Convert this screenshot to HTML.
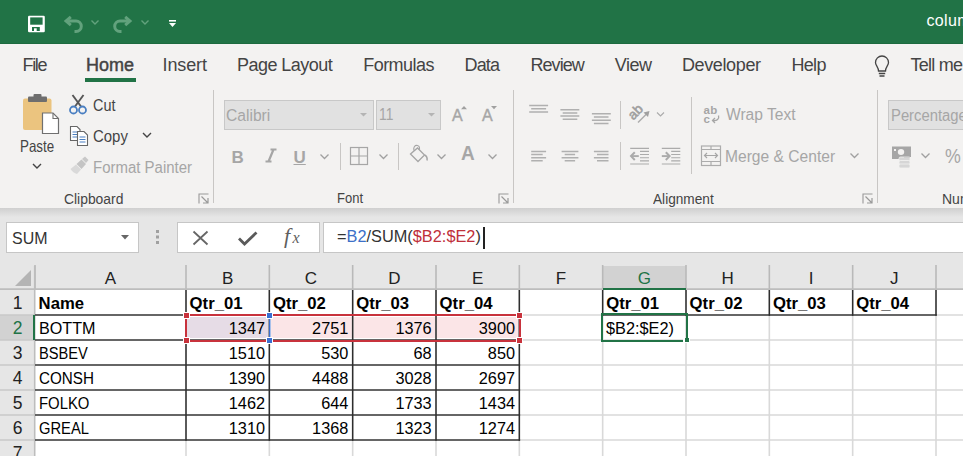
<!DOCTYPE html>
<html><head><meta charset="utf-8">
<style>
*{margin:0;padding:0;box-sizing:border-box}
html,body{width:963px;height:456px;overflow:hidden;background:#fff;font-family:"Liberation Sans",sans-serif;position:relative}
.a{position:absolute}
#title{left:0;top:0;width:963px;height:44px;background:#217346;border-bottom:1px solid #1d6a3f}
#tabs{left:0;top:44px;width:963px;height:165px;background:#f3f2f1}
.tab{position:absolute;top:55px;font-size:18px;color:#444;white-space:nowrap}
#fbar{left:0;top:209px;width:963px;height:57px;background:#e6e6e6}
.rl{position:absolute;font-size:15px;color:#444;white-space:nowrap}
.dis{color:#a6a6a6}
.grp{position:absolute;top:189px;font-size:14px;color:#444}
.vsep{position:absolute;width:1px;background:#c8c6c4}
.hd{position:absolute;height:24px;line-height:26px;text-align:center;font-size:17px}
.rn{position:absolute;left:0;width:35px;height:25px;line-height:27px;text-align:center;font-size:17.5px}
.c{position:absolute;height:25px;line-height:27px;font-size:16.3px;color:#000;white-space:nowrap}
.b{font-weight:bold;font-size:16.7px}
.r{text-align:right}
</style></head><body>
<div id="title" class="a"></div>
<!-- QAT -->
<svg class="a" style="left:0;top:0" width="200" height="45">
  <rect x="28" y="15.8" width="16.8" height="16.4" rx="1.2" fill="#fff"/>
  <rect x="30.2" y="17.4" width="12.4" height="7.3" fill="#217346"/>
  <rect x="32" y="27" width="7.8" height="4" fill="#217346"/>
  <rect x="34" y="28.3" width="2.7" height="3" fill="#fff"/>
  <g fill="none" stroke="#62a27d" stroke-width="3" stroke-linecap="butt">
    <path d="M66 21 H76 A5.3 5.3 0 0 1 76 31.6 H74.5"/>
    <path d="M70.8 16.8 L66 21 L70.8 25.2"/>
    <path d="M130 21 H120 A5.3 5.3 0 0 0 120 31.6 H121.5"/>
    <path d="M125.2 16.8 L130 21 L125.2 25.2"/>
  </g>
  <g fill="none" stroke="#62a27d" stroke-width="1.4">
    <path d="M91.5 20.5 L95 24 L98.5 20.5"/>
    <path d="M141.5 20.5 L145 24 L148.5 20.5"/>
  </g>
  <rect x="169" y="20" width="7" height="1.6" fill="#fff"/>
  <path d="M169 23 H176 L172.5 27 Z" fill="#fff"/>
</svg>
<div class="a" style="left:926.5px;top:12.3px;font-size:16px;letter-spacing:0.35px;color:#fff;white-space:nowrap">columns</div>

<div id="tabs" class="a"></div>
<div class="tab" style="left:22.5px;letter-spacing:-1.37px">File</div>
<div class="tab" style="left:86px;letter-spacing:-0.03px;-webkit-text-stroke:0.45px #444">Home</div>
<div class="a" style="left:85px;top:78px;width:51px;height:4px;background:#217346"></div>
<div class="tab" style="left:162.5px;letter-spacing:-0.12px">Insert</div>
<div class="tab" style="left:237px;letter-spacing:-0.54px">Page Layout</div>
<div class="tab" style="left:363.3px;letter-spacing:-0.56px">Formulas</div>
<div class="tab" style="left:464.5px;letter-spacing:-0.83px">Data</div>
<div class="tab" style="left:530.5px;letter-spacing:-0.96px">Review</div>
<div class="tab" style="left:614.7px;letter-spacing:-0.47px">View</div>
<div class="tab" style="left:682px;letter-spacing:-0.38px">Developer</div>
<div class="tab" style="left:791.5px;letter-spacing:-0.70px">Help</div>
<svg class="a" style="left:872px;top:55px" width="24" height="26">
  <path d="M6.5 16 C6.5 12 3.5 10.5 3.5 7.5 A6.5 6.5 0 0 1 16.5 7.5 C16.5 10.5 13.5 12 13.5 16 Z" fill="none" stroke="#444" stroke-width="1.3"/>
  <path d="M6.8 18.5 H13.2 M7.5 21 H12.5" stroke="#444" stroke-width="1.3"/>
</svg>
<div class="tab" style="left:910.4px;letter-spacing:-0.73px">Tell me</div>

<!-- separators -->
<div class="vsep" style="left:213px;top:90px;height:113px"></div>
<div class="vsep" style="left:513px;top:90px;height:113px"></div>
<div class="vsep" style="left:877px;top:90px;height:113px"></div>

<!-- Clipboard group -->
<svg class="a" style="left:18px;top:90px" width="46" height="48">
  <rect x="5" y="8.5" width="28.5" height="31.5" rx="2" fill="#ebc47f"/>
  <rect x="10" y="6.5" width="19" height="5.5" rx="1" fill="#6e6e6e"/>
  <rect x="15.5" y="4" width="8" height="4" rx="1" fill="#6e6e6e"/>
  <path d="M24.5 23 H35 L40.5 28.5 V43.5 H24.5 Z" fill="#fff" stroke="#707070" stroke-width="1.2"/>
  <path d="M35 23 V28.5 H40.5" fill="none" stroke="#707070" stroke-width="1.1"/>
</svg>
<div id="t_paste" class="rl" style="left:19.70px;top:136.77px;font-size:16.50px;transform:scaleX(0.811);transform-origin:0 0;color:#444">Paste</div>
<svg class="a" style="left:30px;top:160px" width="14" height="12"><path d="M3 4 L7 8 L11 4" fill="none" stroke="#444" stroke-width="1.4"/></svg>

<svg class="a" style="left:66px;top:92px" width="26" height="24">
  <g fill="none" stroke="#555" stroke-width="1.9">
    <path d="M6.5 3 L15 14.5"/><path d="M17.5 3 L9 14.5"/>
  </g>
  <g fill="none" stroke="#4a7fc1" stroke-width="1.8">
    <circle cx="7.5" cy="18" r="3.5"/><circle cx="16.5" cy="18" r="3.5"/>
  </g>
</svg>
<div id="t_cut" class="rl" style="left:93.37px;top:96.81px;font-size:16.00px;transform:scaleX(0.900);transform-origin:0 0;">Cut</div>

<svg class="a" style="left:68px;top:124px" width="24" height="24">
  <path d="M2.5 2.5 H9 L12 5.5 V16.5 H2.5 Z" fill="#fff" stroke="#666" stroke-width="1.1"/>
  <path d="M4.5 8 H10 M4.5 10.5 H10 M4.5 13 H10" stroke="#4a7fc1" stroke-width="1.2"/>
  <path d="M9.5 7.5 H16 L19.5 11 V21.5 H9.5 Z" fill="#fff" stroke="#666" stroke-width="1.1"/>
  <path d="M11.5 13 H17.5 M11.5 15.5 H17.5 M11.5 18 H17.5" stroke="#4a7fc1" stroke-width="1.2"/>
</svg>
<div id="t_copy" class="rl" style="left:93.31px;top:127.58px;font-size:16.00px;transform:scaleX(0.934);transform-origin:0 0;">Copy</div>
<svg class="a" style="left:140px;top:130px" width="14" height="10"><path d="M3 3 L7 7 L11 3" fill="none" stroke="#444" stroke-width="1.4"/></svg>

<svg class="a" style="left:68px;top:156px" width="24" height="20">
  <path d="M2.5 13 L8 8.5 L13 13.5 L9 18 Q5 17 2.5 13 Z" fill="#d9d9d9"/>
  <path d="M8.5 8 L13.5 3.5 L18 8 L13.5 13 Z" fill="#c4c4c4"/>
  <path d="M14 3 L17 0.5 L20.5 4 L18 7 Z" fill="#c8c8c8"/>
</svg>
<div id="t_fp" class="rl dis" style="left:92.76px;top:158.84px;font-size:16.00px;transform:scaleX(0.936);transform-origin:0 0;">Format Painter</div>
<div id="t_clip" class="grp" style="left:64.07px;top:191.09px;font-size:14.00px;transform:scaleX(0.991);transform-origin:0 0;">Clipboard</div>
<svg class="a" style="left:197.5px;top:192.5px" width="14" height="14"><path d="M1 10.5 V1 H10.5" fill="none" stroke="#999" stroke-width="1.1"/><path d="M3.5 3.5 L9.5 9.5 M5 10 H10 V5" fill="none" stroke="#999" stroke-width="1.2"/></svg>

<!-- Font group -->
<div class="a" style="left:224px;top:100px;width:150px;height:30px;background:#e1e1e1;border:1px solid #c8c8c8"></div>
<div id="t_calibri" class="rl dis" style="left:226.32px;top:106.13px;font-size:16.30px;transform:scaleX(0.959);transform-origin:0 0;">Calibri</div>
<svg class="a" style="left:358px;top:110px" width="12" height="10"><path d="M2 3 H9 L5.5 6.5 Z" fill="#b4b4b4"/></svg>
<div class="a" style="left:376px;top:100px;width:65px;height:30px;background:#e1e1e1;border:1px solid #c8c8c8"></div>
<div id="t_11" class="rl dis" style="left:379.24px;top:105.42px;font-size:16.30px;transform:scaleX(0.849);transform-origin:0 0;">11</div>
<svg class="a" style="left:426px;top:110px" width="12" height="10"><path d="M2 3 H9 L5.5 6.5 Z" fill="#b4b4b4"/></svg>
<div class="rl dis" style="left:452px;top:106.5px;font-size:16px;-webkit-text-stroke:0.4px #a6a6a6">A</div>
<svg class="a" style="left:458.5px;top:103.5px" width="10" height="8"><path d="M2 5.2 L5 2 L8 5.2 Z" fill="#a0a0a0"/></svg>
<div class="rl dis" style="left:482px;top:106.5px;font-size:16px;-webkit-text-stroke:0.4px #a6a6a6">A</div>
<svg class="a" style="left:489px;top:103.5px" width="10" height="8"><path d="M2 2 H8 L5 5.2 Z" fill="#a0a0a0"/></svg>

<div class="rl dis" style="left:231.5px;top:147.5px;font-size:17px;font-weight:bold">B</div>
<svg class="a" style="left:264px;top:148px" width="14" height="16"><path d="M6.5 1.5 H12.5 M1.5 13.5 H7.5 M9.5 1.5 L4.5 13.5" fill="none" stroke="#a6a6a6" stroke-width="2.2"/></svg>
<div class="rl dis" style="left:293.5px;top:147.5px;font-size:17px;text-decoration:underline;font-weight:bold">U</div>
<svg class="a" style="left:318px;top:152px" width="14" height="10"><path d="M2.5 2.5 L6.5 6.5 L10.5 2.5" fill="none" stroke="#a0a0a0" stroke-width="1.3"/></svg>
<div class="vsep" style="left:340px;top:143px;height:27px"></div>
<svg class="a" style="left:349px;top:146px" width="20" height="20"><rect x="1.5" y="1.5" width="17" height="17" fill="none" stroke="#a6a6a6" stroke-width="1.2"/><path d="M10 1.5 V18.5 M1.5 10 H18.5" stroke="#a6a6a6" stroke-width="1.2"/></svg>
<svg class="a" style="left:377px;top:152px" width="14" height="10"><path d="M2.5 2.5 L6.5 6.5 L10.5 2.5" fill="none" stroke="#a0a0a0" stroke-width="1.3"/></svg>
<div class="vsep" style="left:398px;top:143px;height:27px"></div>
<svg class="a" style="left:408px;top:144px" width="24" height="22">
  <path d="M2.5 10 L9.5 4 L16.5 11 L10 17.5 Z" fill="none" stroke="#a6a6a6" stroke-width="1.3"/>
  <path d="M6 6.5 C5 3 7 1 9.5 1.5 C11.5 2 12 4 11 6" fill="none" stroke="#a6a6a6" stroke-width="1.2"/>
  <path d="M16.5 11 C18.5 12 19.5 14 19 16.5" fill="none" stroke="#a6a6a6" stroke-width="1.5"/>
</svg>
<svg class="a" style="left:435px;top:152px" width="14" height="10"><path d="M2.5 2.5 L6.5 6.5 L10.5 2.5" fill="none" stroke="#a0a0a0" stroke-width="1.3"/></svg>
<div class="rl dis" style="left:461px;top:142px;font-size:20px;font-weight:bold;transform:scaleX(0.95);transform-origin:0 0">A</div>
<svg class="a" style="left:486px;top:152px" width="14" height="10"><path d="M2.5 2.5 L6.5 6.5 L10.5 2.5" fill="none" stroke="#a0a0a0" stroke-width="1.3"/></svg>
<div id="t_font" class="grp" style="left:337.37px;top:190.12px;font-size:14.00px;transform:scaleX(0.929);transform-origin:0 0;">Font</div>
<svg class="a" style="left:497.8px;top:192.5px" width="14" height="14"><path d="M1 10.5 V1 H10.5" fill="none" stroke="#999" stroke-width="1.1"/><path d="M3.5 3.5 L9.5 9.5 M5 10 H10 V5" fill="none" stroke="#999" stroke-width="1.2"/></svg>

<!-- Alignment group -->
<svg class="a" style="left:520px;top:96px" width="360" height="80">
  <g stroke="#ababab" stroke-width="1.15" fill="none">
    <!-- top align -->
    <path stroke="#b0b0b0" stroke-width="1.5" d="M9.2 9.4 H28.1 M11.2 12.7 H26.1 M9.2 15.9 H28.1 M40.4 13.7 H59.3 M42.7 16.9 H57.3 M40.4 20.1 H59.3 M42.7 23.3 H57.3 M71.9 17.8 H90.8 M73.9 21.0 H88.5 M71.9 24.2 H90.8 M73.9 27.4 H88.5 M11.2 55.5 H26.1 M11.2 58.6 H22.7 M11.2 61.7 H26.1 M11.2 64.8 H22.7 M41.6 55.5 H58.4 M44.7 58.6 H55.1 M41.6 61.7 H58.4 M44.7 64.8 H55.1 M73.9 55.5 H88.5 M77.0 58.6 H88.5 M73.9 61.7 H88.5 M77.0 64.8 H88.5"/>
    <!-- orientation -->
    <path d="M118 26.5 L127 17.5" stroke-width="1.5"/>
    <path d="M137 16.5 L140.5 20 L144 16.5"/>
    <!-- decrease indent -->
    <path d="M110.2 52.4 H129 M120 55.4 H129 M120 58.5 H129 M120 61.7 H129 M120 64.9 H129 M110.2 68 H129"/>
    <path d="M114.8 56.2 L111 60.1 L114.8 64" stroke-width="2"/>
    <path d="M111 60.1 H118.8" stroke-width="1.9"/>
    <!-- increase indent -->
    <path d="M141.8 52.4 H160.3 M151.2 55.4 H160.3 M151.2 58.5 H160.3 M151.2 61.7 H160.3 M151.2 64.9 H160.3 M141.8 68 H160.3"/>
    <path d="M145.8 56.2 L149.6 60.1 L145.8 64" stroke-width="2"/>
    <path d="M141.8 60.1 H149.6" stroke-width="1.9"/>
  </g>
  <text x="107" y="19.5" transform="rotate(-45 116 14.5)" font-family="Liberation Sans" font-size="13.5" fill="#a0a0a0" stroke="#a0a0a0" stroke-width="0.6">ab</text>
  <path d="M129.5 15 L123.5 16.5 L128 21 Z" fill="#a0a0a0"/>
</svg>
<div class="vsep" style="left:620px;top:101px;height:28px"></div>
<div class="vsep" style="left:620px;top:142px;height:28px"></div>
<div class="vsep" style="left:691px;top:97px;height:77px"></div>
<svg class="a" style="left:700px;top:103px" width="24" height="22">
  <text x="3.5" y="11" font-family="Liberation Sans" font-size="11.5" fill="#a6a6a6" font-weight="bold" letter-spacing="0.3">ab</text>
  <text x="3.5" y="20" font-family="Liberation Sans" font-size="11.5" fill="#a6a6a6" font-weight="bold">c</text>
  <path d="M18.5 12.5 C19.5 16 17 18 13 17.5 M15 15 L12.5 17.5 L15 20" fill="none" stroke="#a6a6a6" stroke-width="1.3"/>
</svg>
<div id="t_wrap" class="rl dis" style="left:725.94px;top:106.08px;font-size:16.00px;transform:scaleX(0.974);transform-origin:0 0;">Wrap Text</div>
<svg class="a" style="left:699px;top:144px" width="24" height="24">
  <rect x="2.5" y="2" width="19" height="19.5" fill="none" stroke="#acacac" stroke-width="1.2"/>
  <path d="M2.5 5.5 H21.5 M2.5 17.5 H21.5 M12 2 V5.5 M12 17.5 V21.5" stroke="#acacac" stroke-width="1.2"/>
  <path d="M5.5 11.5 H18.5 M8 9 L5.5 11.5 L8 14 M16 9 L18.5 11.5 L16 14" fill="none" stroke="#a6a6a6" stroke-width="1.2"/>
</svg>
<div id="t_merge" class="rl dis" style="left:724.80px;top:147.64px;font-size:16.00px;transform:scaleX(0.975);transform-origin:0 0;">Merge &amp; Center</div>
<svg class="a" style="left:848px;top:151px" width="14" height="10"><path d="M2.5 2.5 L6.5 6.5 L10.5 2.5" fill="none" stroke="#a0a0a0" stroke-width="1.3"/></svg>
<div id="t_align" class="grp" style="left:652.60px;top:190.52px;font-size:14.00px;transform:scaleX(0.975);transform-origin:0 0;">Alignment</div>
<svg class="a" style="left:861.5px;top:192.5px" width="14" height="14"><path d="M1 10.5 V1 H10.5" fill="none" stroke="#999" stroke-width="1.1"/><path d="M3.5 3.5 L9.5 9.5 M5 10 H10 V5" fill="none" stroke="#999" stroke-width="1.2"/></svg>

<!-- Number group -->
<div class="a" style="left:888px;top:100px;width:80px;height:30px;background:#e1e1e1;border:1px solid #c8c8c8"></div>
<div class="rl dis" style="left:891px;top:106.5px;font-size:15.6px;transform:scaleX(0.95);transform-origin:0 0">Percentage</div>
<svg class="a" style="left:889px;top:144px" width="28" height="26">
  <path d="M3 2.5 H22 V13 H14 V15 H3 Z" fill="#a6a6a6"/>
  <ellipse cx="12" cy="8" rx="3.2" ry="3" fill="#f3f2f1"/>
  <rect x="5" y="5" width="2" height="2" fill="#f3f2f1"/>
  <g fill="#d6d6d6" stroke="#f3f2f1" stroke-width="0.8">
    <rect x="10" y="13" width="11" height="4" rx="1.5"/>
    <rect x="10" y="16.5" width="11" height="4" rx="1.5"/>
    <rect x="10" y="20" width="11" height="4" rx="1.5"/>
  </g>
  <path d="M15 13 H21" stroke="#c0c0c0" stroke-width="1"/>
</svg>
<svg class="a" style="left:919px;top:151px" width="14" height="10"><path d="M2.5 2.5 L6.5 6.5 L10.5 2.5" fill="none" stroke="#a0a0a0" stroke-width="1.3"/></svg>
<div id="t_pcts" class="rl dis" style="left:945.04px;top:144.68px;font-size:20.00px;transform:scaleX(0.888);transform-origin:0 0;">%</div>
<div class="grp" style="left:942px;top:190.5px;font-size:14px">Number</div>

<!-- ribbon bottom shadow -->
<div class="a" style="left:0;top:209px;width:963px;height:5px;background:linear-gradient(#cfcfcf,#e6e6e6)"></div>

<!-- Formula bar -->
<div id="fbar" class="a"></div>
<div class="a" style="left:0;top:208px;width:963px;height:9px;background:linear-gradient(#cfcfcf,#e6e6e6)"></div>
<div class="a" style="left:6px;top:222px;width:133px;height:31px;background:#fff;border:1px solid #c6c6c6"></div>
<div id="t_sum" class="rl" style="left:12.46px;top:229.18px;font-size:16.30px;transform:scaleX(0.981);transform-origin:0 0;color:#333">SUM</div>
<svg class="a" style="left:119px;top:233px" width="12" height="8"><path d="M2 2 H10 L6 6.5 Z" fill="#666"/></svg>
<svg class="a" style="left:154px;top:228px" width="8" height="18"><rect x="2" y="2" width="3" height="3" fill="#a0a0a0"/><rect x="2" y="7.5" width="3" height="3" fill="#a0a0a0"/><rect x="2" y="13" width="3" height="3" fill="#a0a0a0"/></svg>
<div class="a" style="left:177px;top:222px;width:143px;height:31px;background:#fff;border:1px solid #c6c6c6"></div>
<svg class="a" style="left:190px;top:228px" width="120" height="22">
  <path d="M3.5 3.5 L17.5 16.5 M17.5 3.5 L3.5 16.5" stroke="#666" stroke-width="1.8"/>
  <path d="M49 10.5 L54.5 16 L66.5 4.5" fill="none" stroke="#5a5a5a" stroke-width="2.8"/>
  <text x="94" y="15" font-family="Liberation Serif" font-style="italic" font-size="22" fill="#5f5f5f">f</text>
  <text x="102.5" y="15" font-family="Liberation Serif" font-style="italic" font-size="16" fill="#5f5f5f">x</text>
</svg>
<div class="a" style="left:323px;top:222px;width:645px;height:31px;background:#fff;border:1px solid #c6c6c6"></div>
<div id="t_formula" class="rl" style="left:336.91px;top:227.34px;font-size:16.80px;transform:scaleX(0.973);transform-origin:0 0;color:#333">=<span style="color:#3c70c8">B2</span>/SUM(<span style="color:#c0303a">$B2:$E2</span>)</div>
<div class="a" style="left:483px;top:227px;width:1.5px;height:22px;background:#222"></div>
<div class="a" style="left:0px;top:266px;width:963px;height:24px;background:#e6e6e6;"></div>
<div class="a" style="left:0px;top:290px;width:35px;height:166px;background:#e6e6e6;"></div>
<div class="a" style="left:603px;top:266px;width:83px;height:23px;background:#d2d2d2;"></div>
<div class="a" style="left:0px;top:315px;width:34px;height:25px;background:#d2d2d2;"></div>
<svg class="a" style="left:0;top:266px" width="35" height="24"><polygon points="31,4 31,20 15,20" fill="#b4b4b4"/></svg>
<div class="a" style="left:187px;top:317px;width:81px;height:21px;background:#e6dce6;"></div>
<div class="a" style="left:270px;top:317px;width:249px;height:21px;background:#fbe5e7;"></div>
<svg class="a" style="left:0;top:0" width="963" height="456"><line x1="35.00" y1="315.00" x2="963.00" y2="315.00" stroke="#d9d9d9" stroke-width="1.6"/><line x1="35.00" y1="340.00" x2="963.00" y2="340.00" stroke="#d9d9d9" stroke-width="1.6"/><line x1="35.00" y1="365.00" x2="963.00" y2="365.00" stroke="#d9d9d9" stroke-width="1.6"/><line x1="35.00" y1="390.00" x2="963.00" y2="390.00" stroke="#d9d9d9" stroke-width="1.6"/><line x1="35.00" y1="415.00" x2="963.00" y2="415.00" stroke="#d9d9d9" stroke-width="1.6"/><line x1="35.00" y1="440.00" x2="963.00" y2="440.00" stroke="#d9d9d9" stroke-width="1.6"/><line x1="186.00" y1="290.00" x2="186.00" y2="456.00" stroke="#d9d9d9" stroke-width="1.6"/><line x1="269.33" y1="290.00" x2="269.33" y2="456.00" stroke="#d9d9d9" stroke-width="1.6"/><line x1="352.67" y1="290.00" x2="352.67" y2="456.00" stroke="#d9d9d9" stroke-width="1.6"/><line x1="436.00" y1="290.00" x2="436.00" y2="456.00" stroke="#d9d9d9" stroke-width="1.6"/><line x1="519.33" y1="290.00" x2="519.33" y2="456.00" stroke="#d9d9d9" stroke-width="1.6"/><line x1="602.67" y1="290.00" x2="602.67" y2="456.00" stroke="#d9d9d9" stroke-width="1.6"/><line x1="686.00" y1="290.00" x2="686.00" y2="456.00" stroke="#d9d9d9" stroke-width="1.6"/><line x1="769.33" y1="290.00" x2="769.33" y2="456.00" stroke="#d9d9d9" stroke-width="1.6"/><line x1="852.67" y1="290.00" x2="852.67" y2="456.00" stroke="#d9d9d9" stroke-width="1.6"/><line x1="936.00" y1="290.00" x2="936.00" y2="456.00" stroke="#d9d9d9" stroke-width="1.6"/><line x1="35.00" y1="265.00" x2="35.00" y2="290.00" stroke="#b9b9b9" stroke-width="1.6"/><line x1="186.00" y1="265.00" x2="186.00" y2="290.00" stroke="#b9b9b9" stroke-width="1.6"/><line x1="269.33" y1="265.00" x2="269.33" y2="290.00" stroke="#b9b9b9" stroke-width="1.6"/><line x1="352.67" y1="265.00" x2="352.67" y2="290.00" stroke="#b9b9b9" stroke-width="1.6"/><line x1="436.00" y1="265.00" x2="436.00" y2="290.00" stroke="#b9b9b9" stroke-width="1.6"/><line x1="519.33" y1="265.00" x2="519.33" y2="290.00" stroke="#b9b9b9" stroke-width="1.6"/><line x1="602.67" y1="265.00" x2="602.67" y2="290.00" stroke="#b9b9b9" stroke-width="1.6"/><line x1="686.00" y1="265.00" x2="686.00" y2="290.00" stroke="#b9b9b9" stroke-width="1.6"/><line x1="769.33" y1="265.00" x2="769.33" y2="290.00" stroke="#b9b9b9" stroke-width="1.6"/><line x1="852.67" y1="265.00" x2="852.67" y2="290.00" stroke="#b9b9b9" stroke-width="1.6"/><line x1="936.00" y1="265.00" x2="936.00" y2="290.00" stroke="#b9b9b9" stroke-width="1.6"/><line x1="0.00" y1="315.00" x2="35.00" y2="315.00" stroke="#c8c8c8" stroke-width="1.6"/><line x1="0.00" y1="340.00" x2="35.00" y2="340.00" stroke="#c8c8c8" stroke-width="1.6"/><line x1="0.00" y1="365.00" x2="35.00" y2="365.00" stroke="#c8c8c8" stroke-width="1.6"/><line x1="0.00" y1="390.00" x2="35.00" y2="390.00" stroke="#c8c8c8" stroke-width="1.6"/><line x1="0.00" y1="415.00" x2="35.00" y2="415.00" stroke="#c8c8c8" stroke-width="1.6"/><line x1="0.00" y1="440.00" x2="35.00" y2="440.00" stroke="#c8c8c8" stroke-width="1.6"/><line x1="0.00" y1="289.10" x2="963.00" y2="289.10" stroke="#bdbdbd" stroke-width="1.8"/><line x1="34.70" y1="266.00" x2="34.70" y2="456.00" stroke="#bdbdbd" stroke-width="1.6"/><line x1="35.00" y1="315.00" x2="520.13" y2="315.00" stroke="#3c3c3c" stroke-width="1.6"/><line x1="35.00" y1="340.00" x2="520.13" y2="340.00" stroke="#3c3c3c" stroke-width="1.6"/><line x1="35.00" y1="365.00" x2="520.13" y2="365.00" stroke="#3c3c3c" stroke-width="1.6"/><line x1="35.00" y1="390.00" x2="520.13" y2="390.00" stroke="#3c3c3c" stroke-width="1.6"/><line x1="35.00" y1="415.00" x2="520.13" y2="415.00" stroke="#3c3c3c" stroke-width="1.6"/><line x1="35.00" y1="440.00" x2="520.13" y2="440.00" stroke="#3c3c3c" stroke-width="1.6"/><line x1="186.00" y1="290.00" x2="186.00" y2="440.80" stroke="#2e2e2e" stroke-width="1.5"/><line x1="269.33" y1="290.00" x2="269.33" y2="440.80" stroke="#2e2e2e" stroke-width="1.5"/><line x1="352.67" y1="290.00" x2="352.67" y2="440.80" stroke="#2e2e2e" stroke-width="1.5"/><line x1="436.00" y1="290.00" x2="436.00" y2="440.80" stroke="#2e2e2e" stroke-width="1.5"/><line x1="519.33" y1="290.00" x2="519.33" y2="440.80" stroke="#2e2e2e" stroke-width="1.5"/><line x1="601.87" y1="315.00" x2="936.80" y2="315.00" stroke="#3c3c3c" stroke-width="1.6"/><line x1="602.67" y1="290.00" x2="602.67" y2="315.80" stroke="#2e2e2e" stroke-width="1.5"/><line x1="686.00" y1="290.00" x2="686.00" y2="315.80" stroke="#2e2e2e" stroke-width="1.5"/><line x1="769.33" y1="290.00" x2="769.33" y2="315.80" stroke="#2e2e2e" stroke-width="1.5"/><line x1="852.67" y1="290.00" x2="852.67" y2="315.80" stroke="#2e2e2e" stroke-width="1.5"/><line x1="936.00" y1="290.00" x2="936.00" y2="315.80" stroke="#2e2e2e" stroke-width="1.5"/></svg>
<div class="hd" style="left:35.00px;width:151.00px;top:266px;color:#222">A</div>
<div class="hd" style="left:186.00px;width:83.33px;top:266px;color:#222">B</div>
<div class="hd" style="left:269.33px;width:83.33px;top:266px;color:#222">C</div>
<div class="hd" style="left:352.67px;width:83.33px;top:266px;color:#222">D</div>
<div class="hd" style="left:436.00px;width:83.33px;top:266px;color:#222">E</div>
<div class="hd" style="left:519.33px;width:83.33px;top:266px;color:#222">F</div>
<div class="hd" style="left:602.67px;width:83.33px;top:266px;color:#217346">G</div>
<div class="hd" style="left:686.00px;width:83.33px;top:266px;color:#222">H</div>
<div class="hd" style="left:769.33px;width:83.33px;top:266px;color:#222">I</div>
<div class="hd" style="left:852.67px;width:83.33px;top:266px;color:#222">J</div>
<div class="rn" style="top:290px;color:#222">1</div>
<div class="rn" style="top:315px;color:#217346">2</div>
<div class="rn" style="top:340px;color:#222">3</div>
<div class="rn" style="top:365px;color:#222">4</div>
<div class="rn" style="top:390px;color:#222">5</div>
<div class="rn" style="top:415px;color:#222">6</div>
<div class="rn" style="top:440px;color:#222">7</div>
<div class="c b" style="left:38.60px;top:290px">Name</div>
<div class="c b" style="left:189.60px;top:290px">Qtr_01</div>
<div class="c b" style="left:272.93px;top:290px">Qtr_02</div>
<div class="c b" style="left:356.27px;top:290px">Qtr_03</div>
<div class="c b" style="left:439.60px;top:290px">Qtr_04</div>
<div class="c" style="left:39px;top:315px;font-size:16px;transform:scaleX(1.01);transform-origin:0 0">BOTTM</div>
<div class="c r" style="left:186.00px;width:79.03px;top:315px">1347</div>
<div class="c r" style="left:269.33px;width:79.03px;top:315px">2751</div>
<div class="c r" style="left:352.67px;width:79.03px;top:315px">1376</div>
<div class="c r" style="left:436.00px;width:79.03px;top:315px">3900</div>
<div class="c" style="left:39px;top:340px;font-size:16px;transform:scaleX(0.915);transform-origin:0 0">BSBEV</div>
<div class="c r" style="left:186.00px;width:79.03px;top:340px">1510</div>
<div class="c r" style="left:269.33px;width:79.03px;top:340px">530</div>
<div class="c r" style="left:352.67px;width:79.03px;top:340px">68</div>
<div class="c r" style="left:436.00px;width:79.03px;top:340px">850</div>
<div class="c" style="left:39px;top:365px;font-size:16px;transform:scaleX(0.95);transform-origin:0 0">CONSH</div>
<div class="c r" style="left:186.00px;width:79.03px;top:365px">1390</div>
<div class="c r" style="left:269.33px;width:79.03px;top:365px">4488</div>
<div class="c r" style="left:352.67px;width:79.03px;top:365px">3028</div>
<div class="c r" style="left:436.00px;width:79.03px;top:365px">2697</div>
<div class="c" style="left:39px;top:390px;font-size:16px;transform:scaleX(0.93);transform-origin:0 0">FOLKO</div>
<div class="c r" style="left:186.00px;width:79.03px;top:390px">1462</div>
<div class="c r" style="left:269.33px;width:79.03px;top:390px">644</div>
<div class="c r" style="left:352.67px;width:79.03px;top:390px">1733</div>
<div class="c r" style="left:436.00px;width:79.03px;top:390px">1434</div>
<div class="c" style="left:39px;top:415px;font-size:16px;transform:scaleX(0.92);transform-origin:0 0">GREAL</div>
<div class="c r" style="left:186.00px;width:79.03px;top:415px">1310</div>
<div class="c r" style="left:269.33px;width:79.03px;top:415px">1368</div>
<div class="c r" style="left:352.67px;width:79.03px;top:415px">1323</div>
<div class="c r" style="left:436.00px;width:79.03px;top:415px">1274</div>
<div class="c b" style="left:606.27px;top:290px">Qtr_01</div>
<div class="c b" style="left:689.60px;top:290px">Qtr_02</div>
<div class="c b" style="left:772.93px;top:290px">Qtr_03</div>
<div class="c b" style="left:856.27px;top:290px">Qtr_04</div>
<div class="c" style="left:606px;top:315px">$B2:$E2)</div>
<div class="a" style="left:601px;top:313px;width:87px;height:29px;border:2px solid #217346"></div>
<div class="a" style="left:683px;top:338px;width:2px;height:4px;background:#fff;"></div>
<div class="a" style="left:685px;top:338px;width:5px;height:5px;background:#fff;"></div>
<div class="a" style="left:685px;top:338px;width:4px;height:4px;background:#217346;"></div>
<div class="a" style="left:33px;top:315px;width:2px;height:25px;background:#217346;"></div>
<div class="a" style="left:603px;top:288px;width:83px;height:2px;background:#217346;"></div>
<div class="a" style="left:185px;top:314px;width:336px;height:28px;border:2px solid #c8323c"></div>
<div class="a" style="left:269px;top:317px;width:1px;height:21px;background:#3a6fd0;"></div>
<div class="a" style="left:270px;top:317px;width:1px;height:21px;background:#a9c0ea;"></div>
<div class="a" style="left:182.5px;top:312px;width:7px;height:7px;background:#fff"></div>
<div class="a" style="left:183.5px;top:313px;width:5px;height:5px;background:#c8323c"></div>
<div class="a" style="left:516.0px;top:312px;width:7px;height:7px;background:#fff"></div>
<div class="a" style="left:517.0px;top:313px;width:5px;height:5px;background:#c8323c"></div>
<div class="a" style="left:182.5px;top:337px;width:7px;height:7px;background:#fff"></div>
<div class="a" style="left:183.5px;top:338px;width:5px;height:5px;background:#c8323c"></div>
<div class="a" style="left:516.0px;top:337px;width:7px;height:7px;background:#fff"></div>
<div class="a" style="left:517.0px;top:338px;width:5px;height:5px;background:#c8323c"></div>
<div class="a" style="left:266.0px;top:312px;width:7px;height:7px;background:#fff"></div>
<div class="a" style="left:267.0px;top:313px;width:5px;height:5px;background:#3a6fd0"></div>
<div class="a" style="left:266.0px;top:337px;width:7px;height:7px;background:#fff"></div>
<div class="a" style="left:267.0px;top:338px;width:5px;height:5px;background:#3a6fd0"></div></body></html>
